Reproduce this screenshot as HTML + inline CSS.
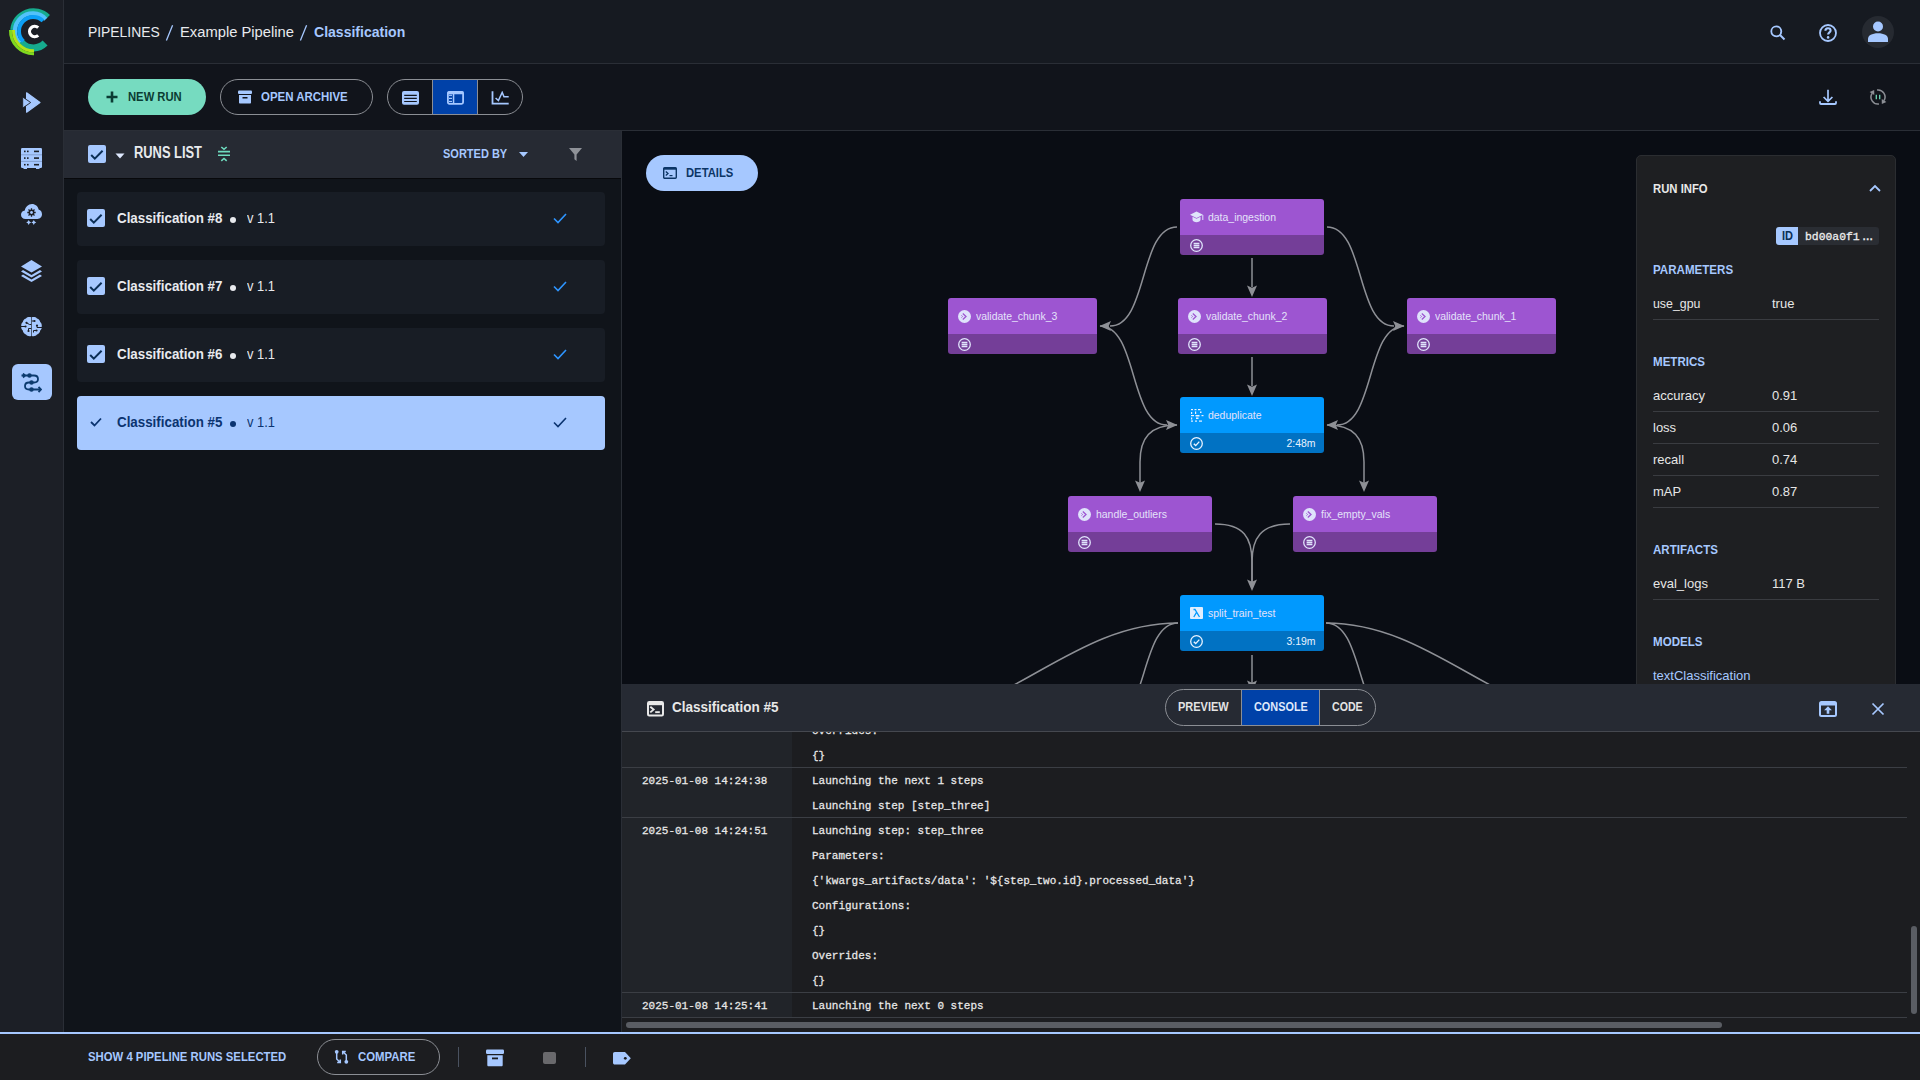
<!DOCTYPE html>
<html><head><meta charset="utf-8">
<style>
*{box-sizing:border-box;margin:0;padding:0}
html,body{width:1920px;height:1080px;overflow:hidden;background:#10131a;font-family:"Liberation Sans",sans-serif;color:#e6e8ec}
.a{position:absolute}
.sq{display:inline-block;transform-origin:0 50%;white-space:nowrap}
#sidebar{left:0;top:0;width:64px;height:1032px;background:#1c1f26;border-right:1px solid #2a2e36}
#header{left:64px;top:0;width:1856px;height:64px;background:#161a21;border-bottom:1px solid #2a2e36}
#toolbar{left:64px;top:64px;width:1856px;height:67px;background:#11141b;border-bottom:1px solid #2a2e36}
#runs{left:64px;top:131px;width:558px;height:901px;background:#10141a;border-right:1px solid #2a2e36}
#runshead{left:0;top:0;width:557px;height:48px;background:#262a33;border-bottom:1px solid #08090c}
.card{left:13px;width:528px;height:54px;background:#181d25;border-radius:4px}
.card .cb{left:10px;top:17px;width:18px;height:18px;background:#a6c8ff;border-radius:2px}
.card .t{left:40px;top:16px;font-size:15px;font-weight:700;color:#e8eaee;line-height:20px}
.card .v{left:170px;top:16px;font-size:15px;color:#e8eaee;line-height:20px}
.card .dot{left:153px;top:25px;width:6px;height:6px;border-radius:50%;background:#e8eaee}
.card .ck{left:476px;top:20px}
#graph{left:622px;top:131px;width:1298px;height:553px;background:#0a0d14;overflow:hidden}
.node{position:absolute;width:144px;height:56px;border-radius:3px;overflow:hidden}
.node .top{position:absolute;left:0;top:0;right:0;height:36px}
.node .bot{position:absolute;left:0;top:36px;right:0;height:20px}
.node.p .top{background:#9d55d1}.node.p .bot{background:#743e98}
.node.b .top{background:#0199fe}.node.b .bot{background:#0172c3}
.node .lbl{position:absolute;left:28.5px;top:12px;font-size:11px;color:#e4e2fa;line-height:13px;white-space:nowrap}
.node .ic{position:absolute;left:10px;top:11px}
.node .bic{position:absolute;left:10px;top:40px}
.node .dur{position:absolute;right:8px;top:40px;font-size:11px;color:#e8f2ff;line-height:13px}
#info{left:1636px;top:155px;width:260px;height:560px;background:#1e1f22;border:1px solid #2b2d31;border-radius:5px}
.sec{position:absolute;left:16px;font-size:13px;font-weight:700;color:#a6c8ff}
.row{position:absolute;left:16px;width:226px;height:32px;border-bottom:1px solid #3a3c41;font-size:13px;color:#e6e6e6}
.row>span{position:absolute;top:8px}
#console{left:622px;top:684px;width:1298px;height:348px;background:#1c1d20}
#conhead{left:0;top:0;width:1298px;height:48px;background:#262a33;border-bottom:1px solid #45484f}
.mono{font-family:"Liberation Mono",monospace;font-size:11px;color:#e8e8e8;white-space:pre;transform:scaleY(1.06);transform-origin:0 50%;-webkit-text-stroke:0.25px #e8e8e8}
#bottombar{left:0;top:1032px;width:1920px;height:48px;background:#1c1d20;border-top:2px solid #a6c8ff}
</style></head><body>

<!-- SIDEBAR -->
<div id="sidebar" class="a">
  <svg class="a" style="left:0;top:0" width="64" height="64" viewBox="0 0 64 64">
    <g fill="none">
      <path d="M 45.1 43.1 A 16.4 16.4 0 0 1 19.3 39.7" stroke="#16ab8e" stroke-width="7"/>
      <path d="M 12.1 29.9 A 21.4 21.4 0 0 1 48.6 16.4" stroke="#16ab8e" stroke-width="3.8"/>
      <path d="M 19.6 43.1 A 17.4 17.4 0 0 1 45.8 19.2" stroke="#52c2fa" stroke-width="4.4"/>
      <path d="M 23.4 41.4 A 14.1 14.1 0 0 1 43 20.9" stroke="#0da0f6" stroke-width="3.9"/>
      <path d="M 10.5 30 A 23 23 0 0 0 34 53.8" stroke="#7fd91f" stroke-width="3"/>
      <path d="M 13.5 30 A 20 20 0 0 0 34 50.8" stroke="#b2e31b" stroke-width="3"/>
    </g>
    <path d="M 38.2 27.6 A 5.2 5.2 0 1 0 38.2 35.4" fill="none" stroke="#ffffff" stroke-width="3.2"/>
  </svg>
  <!-- pipelines icon (play arrows) -->
  <svg class="a" style="left:22px;top:92px" width="19" height="22" viewBox="0 0 19 22">
    <path d="M4.6 0.8 L18 10.5 L4.6 20.2 Z" fill="#a6c8ff" stroke="#a6c8ff" stroke-width="1.2" stroke-linejoin="round"/>
    <path d="M0.7 5 L8.7 10.5 L0.7 16 Z" fill="#a6c8ff" stroke="#1c1f26" stroke-width="0.9" stroke-linejoin="round"/>
  </svg>
  <!-- server icon -->
  <svg class="a" style="left:21px;top:148px" width="21" height="21" viewBox="0 0 21 21">
    <rect x="0" y="0" width="21" height="20" rx="1.2" fill="#a6c8ff"/>
    <path d="M0 6.8 H21 M0 13.4 H21" stroke="#7f9bc9" stroke-width="0.9"/>
    <g fill="#1c1f26"><rect x="3" y="2.6" width="1.6" height="1.6"/><rect x="6" y="2.6" width="1.6" height="1.6"/><rect x="13" y="2.6" width="5" height="1.6"/>
    <rect x="3" y="9.3" width="1.6" height="1.6"/><rect x="6" y="9.3" width="1.6" height="1.6"/><rect x="13" y="9.3" width="5" height="1.6"/>
    <rect x="3" y="15.9" width="1.6" height="1.6"/><rect x="6" y="15.9" width="1.6" height="1.6"/><rect x="13" y="15.9" width="5" height="1.6"/></g>
    <path d="M2.5 20.3 H6 M15 20.3 H18.5" stroke="#a6c8ff" stroke-width="1.2"/>
  </svg>
  <!-- cloud icon -->
  <svg class="a" style="left:21px;top:204px" width="22" height="22" viewBox="0 0 22 22">
    <path d="M4.5 15 C1.8 15 0 13.2 0 10.8 C0 8.6 1.6 6.8 3.8 6.6 C4.3 3 7.3 0 11 0 C14.3 0 17 2.3 17.6 5.5 C20 6 21 8 21 10.3 C21 12.9 19 15 16.5 15 Z" fill="#a6c8ff"/>
    <g stroke="#1c1f26" stroke-width="1.3"><path d="M10.5 4.3 V12.7 M6.3 8.5 H14.7 M7.5 5.5 L13.5 11.5 M13.5 5.5 L7.5 11.5"/></g>
    <circle cx="10.5" cy="8.5" r="2.9" fill="#1c1f26"/><circle cx="10.5" cy="8.5" r="1.4" fill="#a6c8ff"/>
    <path d="M7.7 15.9 L8.6 17.5 L10.2 18.4 L8.6 19.3 L7.7 20.9 L6.8 19.3 L5.2 18.4 L6.8 17.5 Z M12.8 15.9 L13.7 17.5 L15.3 18.4 L13.7 19.3 L12.8 20.9 L11.9 19.3 L10.3 18.4 L11.9 17.5 Z" fill="#a6c8ff"/>
  </svg>
  <!-- layers -->
  <svg class="a" style="left:21px;top:260px" width="21" height="22" viewBox="0 0 21 22">
    <path d="M10.5 0 L21 6.5 L10.5 12.5 L0 6.5 Z" fill="#a6c8ff"/>
    <path d="M2 10 L10.5 15 L19 10 L21 11.5 L10.5 17.5 L0 11.5 Z" fill="#a6c8ff"/>
    <path d="M2 14.5 L10.5 19.5 L19 14.5 L21 16 L10.5 22 L0 16 Z" fill="#a6c8ff"/>
  </svg>
  <!-- brain -->
  <svg class="a" style="left:21px;top:317px" width="21" height="20" viewBox="0 0 21 20">
    <path d="M10.2 0.3 C8 -0.2 6 0.3 5 1.5 C3 2 2 3.5 1.8 5 C0.5 6 0 7.5 0.3 9.5 C0 11 0.5 12.5 1.8 13.5 C2 15.5 3.5 17 5 17.5 C6 19 8 19.5 10.2 19 Z" fill="#a6c8ff"/>
    <path d="M10.8 0.3 C13 -0.2 15 0.3 16 1.5 C18 2 19 3.5 19.2 5 C20.5 6 21 7.5 20.7 9.5 C21 11 20.5 12.5 19.2 13.5 C19 15.5 17.5 17 16 17.5 C15 19 13 19.5 10.8 19 Z" fill="#a6c8ff"/>
    <g stroke="#1c1f26" stroke-width="1" fill="none"><path d="M0 9.5 H4.5 M5.5 5.8 L8.5 7.5 H10.2 M7.5 14 V11.5 H10.2 M13.5 4 H10.8 M16 8.5 V10.5 H21 M15.5 13.5 H12.5 V15.5"/></g>
    <g fill="#1c1f26"><circle cx="4.5" cy="9.5" r="1.1"/><circle cx="5.5" cy="5.8" r="1.1"/><circle cx="7.5" cy="14" r="1.1"/><circle cx="13.5" cy="4" r="1.1"/><circle cx="16" cy="8.5" r="1.1"/><circle cx="15.5" cy="13.5" r="1.1"/></g>
  </svg>
  <!-- active pipeline icon -->
  <div class="a" style="left:12px;top:364px;width:40px;height:36px;background:#a6c8ff;border-radius:6px"></div>
  <svg class="a" style="left:21px;top:373px" width="21" height="20" viewBox="0 0 21 20">
    <g fill="none" stroke="#0c3b6f" stroke-width="1.8">
      <path d="M0.5 2.5 H13 C16.5 2.5 17 4 17 6 C17 8 15.5 9.5 13 9.5 H8 C5.5 9.5 4 11 4 13 C4 15 5.5 16.5 8 16.5 H19.5"/>
      <path d="M2 0.5 L4 2.5 L2 4.5 M17.5 14 L20 16.5 L17.5 19"/>
    </g>
    <circle cx="8.5" cy="2.5" r="2.2" fill="#0c3b6f"/><circle cx="10.5" cy="9.5" r="2.2" fill="#0c3b6f"/><circle cx="10.5" cy="16.5" r="2.2" fill="#0c3b6f"/>
  </svg>
</div>

<!-- HEADER -->
<div id="header" class="a">
  <div class="a" style="left:24px;top:22px;font-size:15.5px;line-height:20px;color:#e8eaee;white-space:nowrap"><span class="sq" style="transform:scaleX(0.895)">PIPELINES</span></div>
  <svg class="a" style="left:100px;top:24px" width="12" height="18" viewBox="0 0 12 18"><path d="M8.6 1.2 L2.4 16.6" stroke="#a6c8ff" stroke-width="1.3"/></svg>
  <div class="a" style="left:116px;top:22px;font-size:15.5px;line-height:20px;color:#e8eaee;white-space:nowrap"><span class="sq" style="transform:scaleX(0.951)">Example Pipeline</span></div>
  <svg class="a" style="left:234px;top:24px" width="12" height="18" viewBox="0 0 12 18"><path d="M8.6 1.2 L2.4 16.6" stroke="#a6c8ff" stroke-width="1.3"/></svg>
  <div class="a" style="left:250px;top:22px;font-size:15.5px;font-weight:700;line-height:20px;color:#a6c8ff;white-space:nowrap"><span class="sq" style="transform:scaleX(0.905)">Classification</span></div>
  <svg class="a" style="left:1706px;top:25px" width="16" height="16" viewBox="0 0 16 16"><circle cx="6.3" cy="6.3" r="5" fill="none" stroke="#a6c8ff" stroke-width="1.8"/><path d="M10 10 L14.5 14.5" stroke="#a6c8ff" stroke-width="2"/></svg>
  <svg class="a" style="left:1754px;top:23px" width="20" height="20" viewBox="0 0 20 20"><circle cx="10" cy="10" r="8" fill="none" stroke="#a6c8ff" stroke-width="1.8"/><path d="M7.4 7.8 C7.4 6 8.6 5.2 10 5.2 C11.6 5.2 12.6 6.2 12.6 7.5 C12.6 9.4 10.1 9.4 10.1 11.6" fill="none" stroke="#a6c8ff" stroke-width="2.1"/><circle cx="10.1" cy="14.4" r="1.3" fill="#a6c8ff"/></svg>
  <div class="a" style="left:1798px;top:16px;width:32px;height:32px;border-radius:50%;background:#262a31"></div>
  <svg class="a" style="left:1804px;top:21px" width="20" height="21" viewBox="0 0 20 21"><circle cx="10" cy="5.5" r="5" fill="#a6c8ff"/><path d="M0 21 V18 C0 14.5 4 12.3 10 12.3 C16 12.3 20 14.5 20 18 V21 Z" fill="#a6c8ff"/></svg>
</div>

<div id="toolbar" class="a">
  <!-- NEW RUN -->
  <div class="a" style="left:24px;top:15px;width:118px;height:36px;background:#76dbc0;border-radius:18px"></div>
  <svg class="a" style="left:42px;top:27px" width="12" height="12" viewBox="0 0 12 12"><path d="M6 0.5 V11.5 M0.5 6 H11.5" stroke="#0b3b33" stroke-width="2.6"/></svg>
  <div class="a" style="left:64px;top:26px;font-size:12.5px;font-weight:700;line-height:14px;color:#0b3b33"><span class="sq" style="transform:scaleX(0.9)">NEW RUN</span></div>
  <!-- OPEN ARCHIVE -->
  <div class="a" style="left:156px;top:15px;width:153px;height:36px;border:1px solid #8b8e94;border-radius:18px"></div>
  <svg class="a" style="left:174px;top:26px" width="14" height="14" viewBox="0 0 14 14"><rect x="0" y="0.5" width="14" height="3.5" rx="1" fill="#a6c8ff"/><path d="M1 5 H13 V12.5 C13 13.2 12.5 13.5 12 13.5 H2 C1.5 13.5 1 13.2 1 12.5 Z" fill="#a6c8ff"/><rect x="4.5" y="7" width="5" height="1.5" fill="#11141b"/></svg>
  <div class="a" style="left:197px;top:26px;font-size:12.5px;font-weight:700;line-height:14px;color:#a6c8ff"><span class="sq" style="transform:scaleX(0.915)">OPEN ARCHIVE</span></div>
  <!-- view toggle -->
  <div class="a" style="left:323px;top:15px;width:136px;height:36px;border:1px solid #8b8e94;border-radius:18px;overflow:hidden">
    <div class="a" style="left:44px;top:0;width:1px;height:34px;background:#8b8e94"></div>
    <div class="a" style="left:45px;top:0;width:44px;height:34px;background:#0041a8"></div>
    <div class="a" style="left:89px;top:0;width:1px;height:34px;background:#8b8e94"></div>
  </div>
  <svg class="a" style="left:338px;top:27px" width="17" height="14" viewBox="0 0 17 14"><rect x="0" y="0" width="17" height="13.7" rx="2" fill="#a6c8ff"/><g stroke="#11141b" stroke-width="1.2"><path d="M2.2 4.3 H14.8 M2.2 7.4 H14.8 M2.2 10.5 H14.8"/></g></svg>
  <svg class="a" style="left:383px;top:27px" width="17" height="14" viewBox="0 0 17 14"><rect x="0.9" y="0.9" width="15.2" height="11.9" rx="1.5" fill="none" stroke="#a6c8ff" stroke-width="1.8"/><rect x="0.5" y="0.3" width="16" height="3" rx="1" fill="#a6c8ff"/><rect x="5.8" y="0.5" width="1.5" height="12.5" fill="#a6c8ff"/><g fill="#a6c8ff"><rect x="2" y="3.7" width="3" height="1.2"/><rect x="2" y="6.8" width="3" height="1.2"/><rect x="2" y="9.9" width="3" height="1.2"/></g></svg>
  <svg class="a" style="left:427px;top:27px" width="18" height="14" viewBox="0 0 18 14"><path d="M1.5 0.2 V12.7 H17.7" fill="none" stroke="#a6c8ff" stroke-width="1.8"/><path d="M4.6 7 L7.4 9.6 L11.2 1.4 L13 5.8 H17.7" fill="none" stroke="#a6c8ff" stroke-width="1.5"/></svg>
  <!-- right icons -->
  <svg class="a" style="left:1755px;top:25px" width="18" height="16" viewBox="0 0 18 16"><path d="M9 0.8 V12.3 M4.6 8 L9 12.4 L13.4 8" fill="none" stroke="#a6c8ff" stroke-width="1.7"/><path d="M1 12.3 V14 C1 14.6 1.4 15 2 15 H16 C16.6 15 17 14.6 17 14 V12.3" fill="none" stroke="#a6c8ff" stroke-width="1.8"/></svg>
  <svg class="a" style="left:1805px;top:24px" width="18" height="18" viewBox="0 0 18 18"><g fill="none" stroke="#8c8f95" stroke-width="1.5"><path d="M8.03 2.07 A7 7 0 0 1 14.94 12.71"/><path d="M9.97 15.93 A7 7 0 0 1 3.06 5.29"/></g><g fill="#8c8f95"><path d="M12.79 15.90 L17.40 14.07 L12.76 10.93 Z"/><path d="M5.21 2.10 L0.60 3.93 L5.24 7.07 Z"/></g><path d="M7.3 6.8 V11.2 M10.7 6.8 V11.2" stroke="#6fd6b5" stroke-width="1.3"/></svg>
</div>
<div id="runs" class="a">
  <div id="runshead" class="a">
    <div class="a" style="left:24px;top:14px;width:18px;height:18px;background:#a6c8ff;border-radius:2px"></div>
    <svg class="a" style="left:26px;top:18px" width="14" height="12" viewBox="0 0 14 12"><path d="M1.2 6 L4.8 9.6 L12.6 1.8" fill="none" stroke="#0b2e55" stroke-width="2"/></svg>
    <svg class="a" style="left:51px;top:22px" width="10" height="6" viewBox="0 0 10 6"><path d="M0.5 0.5 H9.5 L5 5.5 Z" fill="#dfe9ff"/></svg>
    <div class="a" style="left:70px;top:13px;font-size:16px;font-weight:700;line-height:18px;color:#e8eaee"><span class="sq" style="transform:scaleX(0.805)">RUNS LIST</span></div>
    <svg class="a" style="left:153px;top:15px" width="14" height="16" viewBox="0 0 14 16"><path d="M1 5.6 H13 M1 9.2 H13" stroke="#6fdcc0" stroke-width="1.6"/><path d="M4.3 1 L7 3.3 L9.7 1 M4.3 14.8 L7 12.5 L9.7 14.8" fill="none" stroke="#6fdcc0" stroke-width="1.6"/></svg>
    <div class="a" style="left:379px;top:16px;font-size:12.5px;font-weight:700;line-height:14px;color:#a6c8ff"><span class="sq" style="transform:scaleX(0.88)">SORTED BY</span></div>
    <svg class="a" style="left:455px;top:21px" width="9" height="5" viewBox="0 0 9 5"><path d="M0 0 H9 L4.5 5 Z" fill="#a6c8ff"/></svg>
    <svg class="a" style="left:505px;top:17px" width="13" height="13" viewBox="0 0 13 13"><path d="M0 0 H13 L7.6 6.5 V13 L5.4 11.3 V6.5 Z" fill="#8f9298"/></svg>
  </div>
  <div class="a card" style="top:61px;background:#181d25">
    <div class="a cb"></div><svg class="a" style="left:12px;top:21px" width="14" height="12" viewBox="0 0 14 12"><path d="M1.2 6 L4.8 9.6 L12.6 1.8" fill="none" stroke="#0b2e55" stroke-width="2"/></svg>
    <div class="a t" style="color:#e8eaee"><span class="sq" style="transform:scaleX(0.89)">Classification #8</span></div>
    <div class="a dot" style="background:#e8eaee"></div>
    <div class="a v" style="color:#e8eaee"><span class="sq" style="transform:scaleX(0.86)">v 1.1</span></div>
    <svg class="a ck" style="left:476px;top:21px" width="14" height="11" viewBox="0 0 14 11"><path d="M1 5.5 L5 9.5 L13 1" fill="none" stroke="#2e95ff" stroke-width="1.6"/></svg>
  </div>
  <div class="a card" style="top:129px;background:#181d25">
    <div class="a cb"></div><svg class="a" style="left:12px;top:21px" width="14" height="12" viewBox="0 0 14 12"><path d="M1.2 6 L4.8 9.6 L12.6 1.8" fill="none" stroke="#0b2e55" stroke-width="2"/></svg>
    <div class="a t" style="color:#e8eaee"><span class="sq" style="transform:scaleX(0.89)">Classification #7</span></div>
    <div class="a dot" style="background:#e8eaee"></div>
    <div class="a v" style="color:#e8eaee"><span class="sq" style="transform:scaleX(0.86)">v 1.1</span></div>
    <svg class="a ck" style="left:476px;top:21px" width="14" height="11" viewBox="0 0 14 11"><path d="M1 5.5 L5 9.5 L13 1" fill="none" stroke="#2e95ff" stroke-width="1.6"/></svg>
  </div>
  <div class="a card" style="top:197px;background:#181d25">
    <div class="a cb"></div><svg class="a" style="left:12px;top:21px" width="14" height="12" viewBox="0 0 14 12"><path d="M1.2 6 L4.8 9.6 L12.6 1.8" fill="none" stroke="#0b2e55" stroke-width="2"/></svg>
    <div class="a t" style="color:#e8eaee"><span class="sq" style="transform:scaleX(0.89)">Classification #6</span></div>
    <div class="a dot" style="background:#e8eaee"></div>
    <div class="a v" style="color:#e8eaee"><span class="sq" style="transform:scaleX(0.86)">v 1.1</span></div>
    <svg class="a ck" style="left:476px;top:21px" width="14" height="11" viewBox="0 0 14 11"><path d="M1 5.5 L5 9.5 L13 1" fill="none" stroke="#2e95ff" stroke-width="1.6"/></svg>
  </div>
  <div class="a card" style="top:265px;background:#a6c8ff">
    <svg class="a" style="left:13px;top:21px" width="12" height="10" viewBox="0 0 12 10"><path d="M1 5 L4.5 8.5 L11 1.5" fill="none" stroke="#0b3470" stroke-width="1.8"/></svg>
    <div class="a t" style="color:#0b3470"><span class="sq" style="transform:scaleX(0.89)">Classification #5</span></div>
    <div class="a dot" style="background:#0b3470"></div>
    <div class="a v" style="color:#0b3470"><span class="sq" style="transform:scaleX(0.86)">v 1.1</span></div>
    <svg class="a ck" style="left:476px;top:21px" width="14" height="11" viewBox="0 0 14 11"><path d="M1 5.5 L5 9.5 L13 1" fill="none" stroke="#0b3470" stroke-width="1.6"/></svg>
  </div>
</div>
<div id="graph" class="a"></div>
<!--GRAPH-->
<div class="a" id="gwrap" style="left:0;top:0;width:1920px;height:684px;clip-path:inset(131px 0 0 622px)">
<svg class="a" style="left:0;top:0" width="1920" height="684" viewBox="0 0 1920 684"><g fill="none" stroke="#8e9096" stroke-width="1.5"><path d="M1177,227 C1139,227 1148,326 1110,326"/><path d="M1327,227 C1365,227 1356,326 1394,326"/><path d="M1100,326 C1138,326 1129,425 1167,425"/><path d="M1404,326 C1366,326 1375,425 1337,425"/><path d="M1252,258 V287"/><path d="M1252,357 V386"/><path d="M1177,425 C1150,425 1140,438 1140,462 V483"/><path d="M1327,425 C1354,425 1364,438 1364,462 V483"/><path d="M1215,524 C1244,524 1252,538 1252,562 V582"/><path d="M1290,524 C1261,524 1252,538 1252,562 V582"/><path d="M1178,623 C1140,623 1148,722 1110,722"/><path d="M1326,623 C1364,623 1356,722 1394,722"/><path d="M1178,623 C1070,623 1003,722 895,722"/><path d="M1326,623 C1434,623 1501,722 1609,722"/><path d="M1252,655 V686"/></g><g fill="#8e9096"><path d="M1099.5,326 L1111.0,321.0 L1108.7,326 L1111.0,331.0 Z"/><path d="M1404.5,326 L1393.0,321.0 L1395.3,326 L1393.0,331.0 Z"/><path d="M1177.5,425 L1166.0,420.0 L1168.3,425 L1166.0,430.0 Z"/><path d="M1326.5,425 L1338.0,420.0 L1335.7,425 L1338.0,430.0 Z"/><path d="M1252,297 L1247.0,285.5 L1252,287.8 L1257.0,285.5 Z"/><path d="M1252,396 L1247.0,384.5 L1252,386.8 L1257.0,384.5 Z"/><path d="M1140,492 L1135.0,480.5 L1140,482.8 L1145.0,480.5 Z"/><path d="M1364,492 L1359.0,480.5 L1364,482.8 L1369.0,480.5 Z"/><path d="M1252,591 L1247.0,579.5 L1252,581.8 L1257.0,579.5 Z"/><path d="M1252,692 L1247.0,680.5 L1252,682.8 L1257.0,680.5 Z"/></g></svg>
  <div class="node p" style="left:1180px;top:199px;width:144px"><div class="top"></div><div class="bot"></div><svg class="ic" style="left:10px;top:12px" width="14" height="12" viewBox="0 0 14 12"><path d="M6.5 0.5 L13 3.8 L6.5 7 L0 3.8 Z" fill="#dfe3fb"/><path d="M2.5 5.8 V8.8 C2.5 10.3 4.5 11.3 6.5 11.3 C8.5 11.3 10.5 10.3 10.5 8.8 V5.8 L6.5 7.8 Z" fill="#dfe3fb"/><path d="M12.8 4 V9" stroke="#dfe3fb" stroke-width="1"/></svg><div class="lbl" style="left:28px"><span class="sq" style="transform:scaleX(0.95)">data_ingestion</span></div><svg class="bic" style="left:10px;top:39.5px" width="13" height="13" viewBox="0 0 13 13"><circle cx="6.5" cy="6.5" r="5.8" fill="none" stroke="#dfe3fb" stroke-width="1.3"/><path d="M3.6 4.5 H9.4 M3.6 6.5 H9.4 M3.6 8.5 H9.4" stroke="#dfe3fb" stroke-width="1.45"/></svg></div>
  <div class="node p" style="left:948px;top:298px;width:149px"><div class="top"></div><div class="bot"></div><svg class="ic" style="left:10px;top:11.5px" width="13" height="13" viewBox="0 0 13 13"><circle cx="6.5" cy="6.5" r="6.5" fill="#dfe3fb"/><path d="M4.8 3.5 L8 6.5 L4.8 9.5" fill="none" stroke="#9d55d1" stroke-width="1.3"/><path d="M3.4 5.3 L4.6 6.5 L3.4 7.7" fill="none" stroke="#9d55d1" stroke-width="0.9"/></svg><div class="lbl" style="left:28px"><span class="sq" style="transform:scaleX(0.95)">validate_chunk_3</span></div><svg class="bic" style="left:10px;top:39.5px" width="13" height="13" viewBox="0 0 13 13"><circle cx="6.5" cy="6.5" r="5.8" fill="none" stroke="#dfe3fb" stroke-width="1.3"/><path d="M3.6 4.5 H9.4 M3.6 6.5 H9.4 M3.6 8.5 H9.4" stroke="#dfe3fb" stroke-width="1.45"/></svg></div>
  <div class="node p" style="left:1178px;top:298px;width:149px"><div class="top"></div><div class="bot"></div><svg class="ic" style="left:10px;top:11.5px" width="13" height="13" viewBox="0 0 13 13"><circle cx="6.5" cy="6.5" r="6.5" fill="#dfe3fb"/><path d="M4.8 3.5 L8 6.5 L4.8 9.5" fill="none" stroke="#9d55d1" stroke-width="1.3"/><path d="M3.4 5.3 L4.6 6.5 L3.4 7.7" fill="none" stroke="#9d55d1" stroke-width="0.9"/></svg><div class="lbl" style="left:28px"><span class="sq" style="transform:scaleX(0.95)">validate_chunk_2</span></div><svg class="bic" style="left:10px;top:39.5px" width="13" height="13" viewBox="0 0 13 13"><circle cx="6.5" cy="6.5" r="5.8" fill="none" stroke="#dfe3fb" stroke-width="1.3"/><path d="M3.6 4.5 H9.4 M3.6 6.5 H9.4 M3.6 8.5 H9.4" stroke="#dfe3fb" stroke-width="1.45"/></svg></div>
  <div class="node p" style="left:1407px;top:298px;width:149px"><div class="top"></div><div class="bot"></div><svg class="ic" style="left:10px;top:11.5px" width="13" height="13" viewBox="0 0 13 13"><circle cx="6.5" cy="6.5" r="6.5" fill="#dfe3fb"/><path d="M4.8 3.5 L8 6.5 L4.8 9.5" fill="none" stroke="#9d55d1" stroke-width="1.3"/><path d="M3.4 5.3 L4.6 6.5 L3.4 7.7" fill="none" stroke="#9d55d1" stroke-width="0.9"/></svg><div class="lbl" style="left:28px"><span class="sq" style="transform:scaleX(0.95)">validate_chunk_1</span></div><svg class="bic" style="left:10px;top:39.5px" width="13" height="13" viewBox="0 0 13 13"><circle cx="6.5" cy="6.5" r="5.8" fill="none" stroke="#dfe3fb" stroke-width="1.3"/><path d="M3.6 4.5 H9.4 M3.6 6.5 H9.4 M3.6 8.5 H9.4" stroke="#dfe3fb" stroke-width="1.45"/></svg></div>
  <div class="node b" style="left:1180px;top:397px;width:144px"><div class="top"></div><div class="bot"></div><svg class="ic" style="left:11px;top:12px" width="13" height="13" viewBox="0 0 13 13"><g fill="#e8f2ff"><rect x="0" y="0" width="2" height="1.2"/><rect x="3.5" y="0" width="2" height="1.2"/><rect x="7" y="0" width="2.5" height="1.2"/><rect x="0" y="3" width="1.2" height="2"/><rect x="4" y="2.5" width="1.2" height="2.5"/><rect x="9" y="2.5" width="1.5" height="1.5"/><rect x="0" y="6" width="3" height="1.2"/><rect x="4.5" y="6" width="4" height="1.5"/><rect x="10.5" y="6" width="2" height="1.2"/><rect x="0" y="8.5" width="1.2" height="2"/><rect x="5" y="8.5" width="2.5" height="1.5"/><rect x="0" y="11.5" width="2" height="1.2"/><rect x="4" y="11.5" width="2" height="1.2"/><rect x="8" y="11.5" width="3" height="1.2"/></g></svg><div class="lbl" style="left:28px"><span class="sq" style="transform:scaleX(0.95)">deduplicate</span></div><svg class="bic" style="left:10px;top:40px" width="13" height="13" viewBox="0 0 13 13"><circle cx="6.5" cy="6.5" r="5.8" fill="none" stroke="#e8f2ff" stroke-width="1.3"/><path d="M3.8 6.7 L5.7 8.6 L9.3 4.6" fill="none" stroke="#e8f2ff" stroke-width="1.4"/></svg><div class="dur"><span class="sq" style="transform:scaleX(0.95);transform-origin:100% 50%">2:48m</span></div></div>
  <div class="node p" style="left:1068px;top:496px;width:144px"><div class="top"></div><div class="bot"></div><svg class="ic" style="left:10px;top:11.5px" width="13" height="13" viewBox="0 0 13 13"><circle cx="6.5" cy="6.5" r="6.5" fill="#dfe3fb"/><path d="M4.8 3.5 L8 6.5 L4.8 9.5" fill="none" stroke="#9d55d1" stroke-width="1.3"/><path d="M3.4 5.3 L4.6 6.5 L3.4 7.7" fill="none" stroke="#9d55d1" stroke-width="0.9"/></svg><div class="lbl" style="left:28px"><span class="sq" style="transform:scaleX(0.95)">handle_outliers</span></div><svg class="bic" style="left:10px;top:39.5px" width="13" height="13" viewBox="0 0 13 13"><circle cx="6.5" cy="6.5" r="5.8" fill="none" stroke="#dfe3fb" stroke-width="1.3"/><path d="M3.6 4.5 H9.4 M3.6 6.5 H9.4 M3.6 8.5 H9.4" stroke="#dfe3fb" stroke-width="1.45"/></svg></div>
  <div class="node p" style="left:1293px;top:496px;width:144px"><div class="top"></div><div class="bot"></div><svg class="ic" style="left:10px;top:11.5px" width="13" height="13" viewBox="0 0 13 13"><circle cx="6.5" cy="6.5" r="6.5" fill="#dfe3fb"/><path d="M4.8 3.5 L8 6.5 L4.8 9.5" fill="none" stroke="#9d55d1" stroke-width="1.3"/><path d="M3.4 5.3 L4.6 6.5 L3.4 7.7" fill="none" stroke="#9d55d1" stroke-width="0.9"/></svg><div class="lbl" style="left:28px"><span class="sq" style="transform:scaleX(0.95)">fix_empty_vals</span></div><svg class="bic" style="left:10px;top:39.5px" width="13" height="13" viewBox="0 0 13 13"><circle cx="6.5" cy="6.5" r="5.8" fill="none" stroke="#dfe3fb" stroke-width="1.3"/><path d="M3.6 4.5 H9.4 M3.6 6.5 H9.4 M3.6 8.5 H9.4" stroke="#dfe3fb" stroke-width="1.45"/></svg></div>
  <div class="node b" style="left:1180px;top:595px;width:144px"><div class="top"></div><div class="bot"></div><svg class="ic" style="left:10px;top:12px" width="13" height="12" viewBox="0 0 13 12"><rect x="0" y="0" width="13" height="12" rx="1" fill="#dfeeff"/><path d="M3.5 2.5 H5 L9.5 10 M6.4 5.6 L3.8 10" fill="none" stroke="#0199fe" stroke-width="1.3"/></svg><div class="lbl" style="left:28px"><span class="sq" style="transform:scaleX(0.95)">split_train_test</span></div><svg class="bic" style="left:10px;top:40px" width="13" height="13" viewBox="0 0 13 13"><circle cx="6.5" cy="6.5" r="5.8" fill="none" stroke="#e8f2ff" stroke-width="1.3"/><path d="M3.8 6.7 L5.7 8.6 L9.3 4.6" fill="none" stroke="#e8f2ff" stroke-width="1.4"/></svg><div class="dur"><span class="sq" style="transform:scaleX(0.95);transform-origin:100% 50%">3:19m</span></div></div>
</div>
<!--/GRAPH-->
<!-- DETAILS btn -->
<div class="a" style="left:646px;top:155px;width:112px;height:36px;background:#a6c8ff;border-radius:18px"></div>
<svg class="a" style="left:663px;top:167px" width="14" height="12" viewBox="0 0 14 12"><rect x="0.7" y="0.7" width="12.6" height="10.6" rx="1" fill="none" stroke="#0c3566" stroke-width="1.4"/><rect x="0.7" y="0.7" width="12.6" height="2" fill="#0c3566"/><path d="M2.8 4.5 L5 6.5 L2.8 8.5" fill="none" stroke="#0c3566" stroke-width="1.3"/><rect x="6.5" y="8" width="3" height="1.2" fill="#0c3566"/></svg>
<div class="a" style="left:686px;top:165px;font-size:12.5px;font-weight:700;line-height:16px;color:#0c3566"><span class="sq" style="transform:scaleX(0.9)">DETAILS</span></div>

<!-- RUN INFO panel -->
<div id="info" class="a">
  <div class="a" style="left:16px;top:25px;font-size:13px;font-weight:700;line-height:16px;color:#e8e8e8"><span class="sq" style="transform:scaleX(0.87)">RUN INFO</span></div>
  <svg class="a" style="left:232px;top:28px" width="12" height="8" viewBox="0 0 12 8"><path d="M1 7 L6 2 L11 7" fill="none" stroke="#a6c8ff" stroke-width="1.8"/></svg>
  <div class="a" style="left:139px;top:71px;width:103px;height:18px;background:#2a2d33;border-radius:3px;overflow:hidden">
    <div class="a" style="left:0;top:0;width:22px;height:18px;background:#a6c8ff"></div>
    <div class="a" style="left:5.5px;top:2px;font-size:12px;font-weight:700;line-height:14px;color:#0b2e55"><span class="sq" style="transform:scaleX(0.92)">ID</span></div>
    <div class="a" style="left:29px;top:2px;font-family:'Liberation Mono',monospace;font-size:11.4px;line-height:16px;color:#ececec;white-space:pre;-webkit-text-stroke:0.3px #ececec">bd00a0f1<span style="letter-spacing:-3.3px;margin-left:1px">...</span></div>
  </div>
  <div class="sec" style="top:106px;line-height:16px"><span class="sq" style="transform:scaleX(0.89)">PARAMETERS</span></div>
  <div class="row" style="top:132px"><span style="left:0"><span class="sq" style="transform:scaleX(0.95)">use_gpu</span></span><span style="left:119px">true</span></div>
  <div class="sec" style="top:198px;line-height:16px"><span class="sq" style="transform:scaleX(0.89)">METRICS</span></div>
  <div class="row" style="top:224px"><span style="left:0">accuracy</span><span style="left:119px">0.91</span></div>
  <div class="row" style="top:256px"><span style="left:0">loss</span><span style="left:119px">0.06</span></div>
  <div class="row" style="top:288px"><span style="left:0">recall</span><span style="left:119px">0.74</span></div>
  <div class="row" style="top:320px"><span style="left:0">mAP</span><span style="left:119px">0.87</span></div>
  <div class="sec" style="top:386px;line-height:16px"><span class="sq" style="transform:scaleX(0.89)">ARTIFACTS</span></div>
  <div class="row" style="top:412px"><span style="left:0">eval_logs</span><span style="left:119px">117 B</span></div>
  <div class="sec" style="top:478px;line-height:16px"><span class="sq" style="transform:scaleX(0.89)">MODELS</span></div>
  <div class="a" style="left:16px;top:512px;font-size:13px;line-height:16px;color:#a6c8ff">textClassification</div>
</div>
<div id="console" class="a">
  <div class="a" style="left:0;top:48px;width:170px;height:285px;background:#212429"></div>
  <div class="a mono" style="left:190px;top:40px;line-height:14px">Overrides:</div><div class="a mono" style="left:190px;top:65px;line-height:14px">{}</div><div class="a" style="left:0;top:83px;width:1285px;height:1px;background:#3b3e44"></div><div class="a mono" style="left:20px;top:90px;line-height:14px">2025-01-08 14:24:38</div><div class="a mono" style="left:190px;top:90px;line-height:14px">Launching the next 1 steps</div><div class="a mono" style="left:190px;top:115px;line-height:14px">Launching step [step_three]</div><div class="a" style="left:0;top:133px;width:1285px;height:1px;background:#3b3e44"></div><div class="a mono" style="left:20px;top:140px;line-height:14px">2025-01-08 14:24:51</div><div class="a mono" style="left:190px;top:140px;line-height:14px">Launching step: step_three</div><div class="a mono" style="left:190px;top:165px;line-height:14px">Parameters:</div><div class="a mono" style="left:190px;top:190px;line-height:14px">{'kwargs_artifacts/data': '${step_two.id}.processed_data'}</div><div class="a mono" style="left:190px;top:215px;line-height:14px">Configurations:</div><div class="a mono" style="left:190px;top:240px;line-height:14px">{}</div><div class="a mono" style="left:190px;top:265px;line-height:14px">Overrides:</div><div class="a mono" style="left:190px;top:290px;line-height:14px">{}</div><div class="a" style="left:0;top:308px;width:1285px;height:1px;background:#3b3e44"></div><div class="a mono" style="left:20px;top:315px;line-height:14px">2025-01-08 14:25:41</div><div class="a mono" style="left:190px;top:315px;line-height:14px">Launching the next 0 steps</div><div class="a" style="left:0;top:333px;width:1285px;height:1px;background:#3b3e44"></div>
  <div class="a" style="left:4px;top:338px;width:1096px;height:6px;background:#5a5d63;border-radius:3px"></div>
  <div class="a" style="left:1289px;top:242px;width:6px;height:88px;background:#5a5d63;border-radius:3px"></div>
  <div id="conhead" class="a">
    <svg class="a" style="left:25px;top:17px" width="17" height="16" viewBox="0 0 17 16"><rect x="1" y="1" width="15" height="13.5" rx="1.2" fill="none" stroke="#e8e8e8" stroke-width="2"/><rect x="1" y="1" width="15" height="3.2" fill="#e8e8e8"/><path d="M3.3 5.8 L6.6 8.6 L3.3 11.4" fill="none" stroke="#e8e8e8" stroke-width="1.9"/><rect x="8.2" y="10.2" width="4.6" height="1.9" fill="#e8e8e8"/></svg>
    <div class="a" style="left:50px;top:13px;font-size:15.5px;font-weight:700;line-height:20px;color:#e8e8e8"><span class="sq" style="transform:scaleX(0.87)">Classification #5</span></div>
    <div class="a" style="left:543px;top:5px;width:211px;height:37px;border:1px solid #8b8e94;border-radius:19px;overflow:hidden">
      <div class="a" style="left:75px;top:0;width:1px;height:35px;background:#8b8e94"></div>
      <div class="a" style="left:76px;top:0;width:77px;height:35px;background:#0041a8"></div>
      <div class="a" style="left:153px;top:0;width:1px;height:35px;background:#8b8e94"></div>
    </div>
    <div class="a" style="left:556px;top:16px;font-size:12.5px;font-weight:700;line-height:14px;color:#e3e3e3"><span class="sq" style="transform:scaleX(0.88)">PREVIEW</span></div>
    <div class="a" style="left:632px;top:16px;font-size:12.5px;font-weight:700;line-height:14px;color:#dfe8fb"><span class="sq" style="transform:scaleX(0.87)">CONSOLE</span></div>
    <div class="a" style="left:710px;top:16px;font-size:12.5px;font-weight:700;line-height:14px;color:#e3e3e3"><span class="sq" style="transform:scaleX(0.85)">CODE</span></div>
    <svg class="a" style="left:1197px;top:17px" width="18" height="16" viewBox="0 0 18 16"><rect x="1" y="1" width="16" height="14" rx="1.5" fill="none" stroke="#a6c8ff" stroke-width="2"/><rect x="1" y="1" width="16" height="3.5" fill="#a6c8ff"/><path d="M9 5.2 L12.9 9.2 H10.3 V12.8 H7.7 V9.2 H5.1 Z" fill="#a6c8ff"/></svg>
    <svg class="a" style="left:1249px;top:18px" width="14" height="14" viewBox="0 0 14 14"><path d="M1.5 1.5 L12.5 12.5 M12.5 1.5 L1.5 12.5" stroke="#a6c8ff" stroke-width="1.7"/></svg>
  </div>
</div>
<div id="bottombar" class="a">
  <div class="a" style="left:88px;top:15px;font-size:12.5px;font-weight:700;line-height:16px;color:#a6c8ff"><span class="sq" style="transform:scaleX(0.906)">SHOW 4 PIPELINE RUNS SELECTED</span></div>
  <div class="a" style="left:317px;top:5px;width:123px;height:36px;border:1px solid #8b8e94;border-radius:18px"></div>
  <svg class="a" style="left:334px;top:15px" width="15" height="16" viewBox="0 0 15 16"><g fill="none" stroke="#a6c8ff" stroke-width="1.5"><path d="M2.7 3 V10 L6 13.3 M3.2 13.6 H6.3 V10.5"/><path d="M12.3 13 V6 L9 2.7 M11.8 2.4 H8.7 V5.5"/></g><circle cx="2.7" cy="2.8" r="1.9" fill="#a6c8ff"/><circle cx="12.3" cy="12.8" r="1.9" fill="#a6c8ff"/></svg>
  <div class="a" style="left:358px;top:15px;font-size:12.5px;font-weight:700;line-height:16px;color:#a6c8ff"><span class="sq" style="transform:scaleX(0.91)">COMPARE</span></div>
  <div class="a" style="left:458px;top:13px;width:1px;height:20px;background:#4a5260"></div>
  <svg class="a" style="left:486px;top:15px" width="18" height="18" viewBox="0 0 18 18"><rect x="0" y="0.5" width="18" height="4.5" rx="1.2" fill="#a6c8ff"/><path d="M1.3 6.3 H16.7 V16 C16.7 16.8 16.2 17.3 15.5 17.3 H2.5 C1.8 17.3 1.3 16.8 1.3 16 Z" fill="#a6c8ff"/><rect x="6" y="8.5" width="6" height="1.8" fill="#1c1d20"/></svg>
  <div class="a" style="left:543px;top:17.5px;width:12.5px;height:12.5px;background:#69696c;border-radius:2px"></div>
  <div class="a" style="left:585px;top:13px;width:1px;height:20px;background:#4a5260"></div>
  <svg class="a" style="left:613px;top:17.5px" width="18" height="13" viewBox="0 0 18 13"><path d="M0 1.8 C0 0.8 0.8 0 1.8 0 H12 L17.8 6.3 L12 12.5 H1.8 C0.8 12.5 0 11.7 0 10.7 Z" fill="#a6c8ff"/><circle cx="12.3" cy="6.3" r="1.4" fill="#1c1d20"/></svg>
</div>

</body></html>
